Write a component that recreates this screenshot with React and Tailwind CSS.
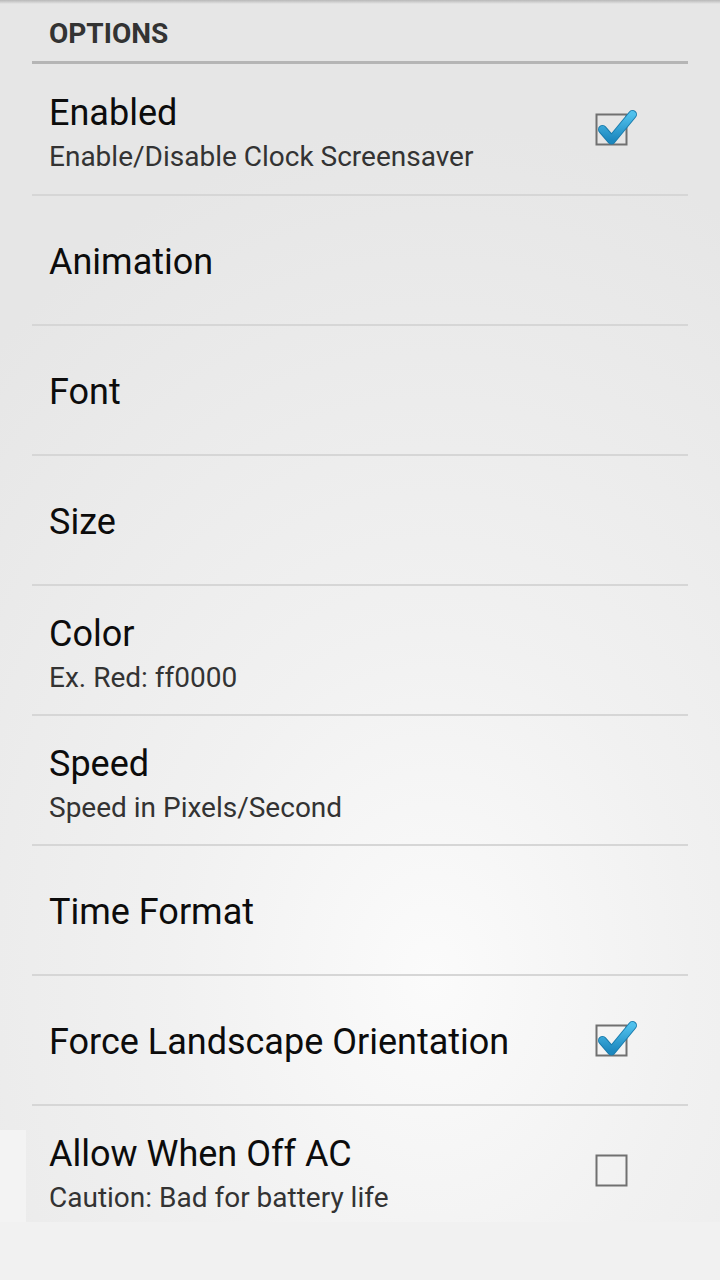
import React from 'react';

const rows = [
  { title: 'Enabled', summary: 'Enable/Disable Clock Screensaver', box: true, checked: true, first: true },
  { title: 'Animation' },
  { title: 'Font' },
  { title: 'Size' },
  { title: 'Color', summary: 'Ex. Red: ff0000' },
  { title: 'Speed', summary: 'Speed in Pixels/Second' },
  { title: 'Time Format' },
  { title: 'Force Landscape Orientation', box: true, checked: true },
];

function CheckBox({ checked, id }) {
  return (
    <svg width="46" height="40" viewBox="0 0 46 40" className="shrink-0 overflow-visible">
      <defs>
        <linearGradient id={`chk-${id}`} x1="0" y1="0" x2="0" y2="1">
          <stop offset="0" stopColor="#4fc0ec" />
          <stop offset="1" stopColor="#1d88bf" />
        </linearGradient>
      </defs>
      <rect x="4.5" y="5.5" width="30" height="30" fill="none" stroke="#707070" strokeWidth="2" />
      {checked && (
        <>
          <path d="M10.5 20.5 L19.5 31 L40.5 5.5" fill="none" stroke="#1a7cad" strokeWidth="9" strokeLinecap="round" strokeLinejoin="round" />
          <path d="M10.5 20.5 L19.5 31 L40.5 5.5" fill="none" stroke={`url(#chk-${id})`} strokeWidth="7" strokeLinecap="round" strokeLinejoin="round" />
        </>
      )}
    </svg>
  );
}

function PrefRow({ title, summary, checked, hasBox, first, id }) {
  return (
    <div className={`${first ? 'h-[130px]' : 'h-[128px]'} flex items-center pl-[17px]`}>
      <div className={`flex-1 ${summary ? 'pt-[12px]' : 'pt-[4px]'}`}>
        <div className="text-[36px] leading-[44px] text-[#0c0c0c]">{title}</div>
        {summary && <div className="text-[28px] leading-[44px] text-[#333333]">{summary}</div>}
      </div>
      {hasBox && (
        <div className="mr-[50px]">
          <CheckBox checked={checked} id={id} />
        </div>
      )}
    </div>
  );
}

export default function App() {
  return (
    <div
      className="w-[720px] h-[1280px] flex flex-col bg-[#f1f1f1] overflow-hidden"
      style={{ fontFamily: 'Roboto, "Noto Sans", sans-serif' }}
    >
      <div className="h-[1222px] shrink-0 flex flex-col bg-[radial-gradient(ellipse_90%_70%_at_60%_80%,#fbfbfb_0%,#f1f1f1_40%,#e6e6e6_100%)]">
        <div className="h-[4px] bg-gradient-to-b from-[#b8b8b8] to-transparent" />
        <div className="px-[49px] pt-[16px] text-[28px] leading-[28px] font-bold text-[#333333]">OPTIONS</div>
        <div className="mx-[32px] mt-[13px] h-[3px] bg-[#b5b5b5]" />

        <div className="mx-[32px] flex flex-col">
          {rows.map((r, i) => (
            <div key={r.title} className="flex flex-col">
              <PrefRow
                id={i}
                title={r.title}
                summary={r.summary}
                hasBox={r.box}
                checked={r.checked}
                first={r.first}
              />
              <div className="h-[2px] bg-[#d6d6d6]" />
            </div>
          ))}
        </div>

        <div className="flex-1 flex min-h-0">
          <div className="w-[26px] self-end h-[92px] bg-[#f3f3f3]" />
          <div className="flex-1 ml-[6px] mr-[32px] overflow-hidden">
            <PrefRow id="last" title="Allow When Off AC" summary="Caution: Bad for battery life" hasBox checked={false} />
          </div>
        </div>
      </div>
      <div className="flex-1" />
    </div>
  );
}
